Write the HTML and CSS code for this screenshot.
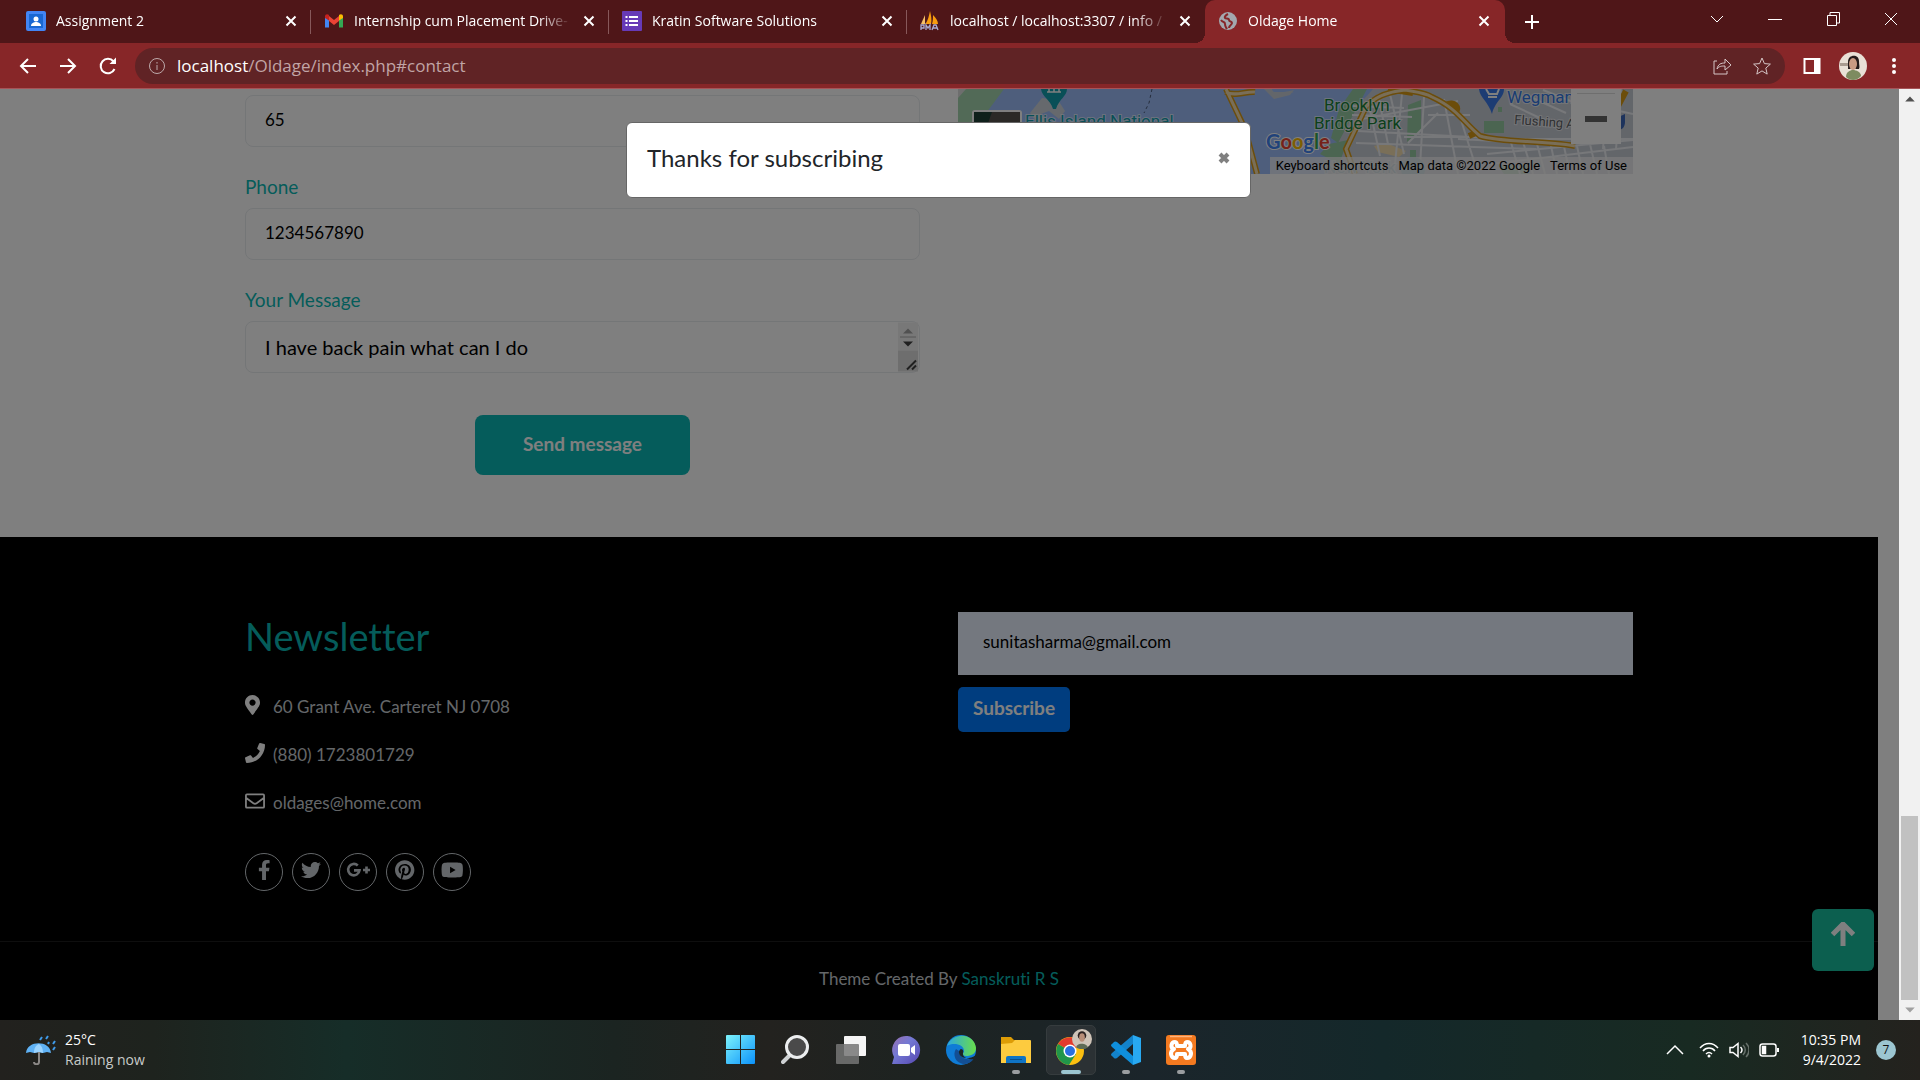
FILE: index.html
```html
<!DOCTYPE html>
<html lang="en">
<head>
<meta charset="utf-8">
<title>Oldage Home</title>
<link rel="stylesheet" href="styles.css">
</head>
<body class="desktop">

<header class="tabstrip">
  <nav class="tabs" aria-label="Tabs">
    <div class="tab">
      <svg class="favicon" viewBox="0 0 20 20"><rect width="20" height="20" rx="2" fill="#4285f4"/><rect x="3" y="3" width="14" height="14" fill="#1967d2"/><circle cx="10" cy="8" r="2.5" fill="#fff"/><path d="M5 15c0-3 3-4 5-4s5 1 5 4z" fill="#fff"/></svg>
      <a href="#" class="tab-title">Assignment 2</a>
      <button class="tab-close" aria-label="Close tab"><svg viewBox="0 0 12 12"><path d="M1.500 1.500l9 9m0-9l-9 9"/></svg></button>
    </div>
    <div class="tab">
      <svg class="favicon" viewBox="0 0 20 20"><path d="M1 5v11.500h4V9z" fill="#4285f4"/><path d="M19 5v11.500h-4V9z" fill="#34a853"/><path d="M5 5v5l5 4 5-4V5l-5 4z" fill="#ea4335"/><path d="M1 5.500C1 3 3.500 2.500 5 4v5.500L1 7z" fill="#c5221f"/><path d="M19 5.500C19 3 16.500 2.500 15 4v5.500L19 7z" fill="#fbbc04"/></svg>
      <a href="#" class="tab-title">Internship cum Placement Drive-</a>
      <button class="tab-close" aria-label="Close tab"><svg viewBox="0 0 12 12"><path d="M1.500 1.500l9 9m0-9l-9 9"/></svg></button>
    </div>
    <div class="tab">
      <svg class="favicon" viewBox="0 0 20 20"><rect width="20" height="20" rx="1" fill="#673ab7"/><path d="M7 6h9M7 10h9M7 14h9M3.500 6h2M3.500 10h2M3.500 14h2" stroke="#fff" stroke-width="2"/></svg>
      <a href="#" class="tab-title">Kratin Software Solutions</a>
      <button class="tab-close" aria-label="Close tab"><svg viewBox="0 0 12 12"><path d="M1.500 1.500l9 9m0-9l-9 9"/></svg></button>
    </div>
    <div class="tab">
      <svg class="favicon" viewBox="0 0 20 20"><path d="M1 13L5 4v9z" fill="#f6c067"/><path d="M5.500 13C8 9 9 5 10 0c1 4 2 9 1 13z" fill="#f89c0e"/><path d="M12 13c1-3 1-6 1-9 3 3 5 6 5 9z" fill="#f89c0e"/><path d="M1 19v-5h3v3H1m5 2v-5l2 3 2-3v5m2 0l2-5h2l2 5m-5-2h4" fill="none" stroke="#a9abd0" stroke-width="1.300"/></svg>
      <a href="#" class="tab-title">localhost / localhost:3307 / info /</a>
      <button class="tab-close" aria-label="Close tab"><svg viewBox="0 0 12 12"><path d="M1.500 1.500l9 9m0-9l-9 9"/></svg></button>
    </div>
    <div class="tab tab-active">
      <svg class="favicon" viewBox="0 0 20 20"><circle cx="10" cy="10" r="9" fill="#a3a8ae"/><path d="M10 3c-2 1-4 3-3 4s4 0 4 2 3 1 3 3-3 2-3 5M3 9c2 3 4 1 4 4s1 3 2 5" fill="none" stroke="#872628" stroke-width="2"/></svg>
      <a href="#" class="tab-title">Oldage Home</a>
      <button class="tab-close" aria-label="Close tab"><svg viewBox="0 0 12 12"><path d="M1.500 1.500l9 9m0-9l-9 9"/></svg></button>
    </div>
    <button class="new-tab" aria-label="New tab"><svg viewBox="0 0 16 16"><path d="M8 1v14M1 8h14"/></svg></button>
  </nav>
  <div class="window-controls">
    <button aria-label="Search tabs"><svg viewBox="0 0 14 14"><path d="M1 4l6 6 6-6"/></svg></button>
    <button aria-label="Minimize"><svg viewBox="0 0 14 14"><path d="M0 7.500h14"/></svg></button>
    <button aria-label="Restore"><svg viewBox="0 0 14 14"><path d="M1.500 3.500h9v10h-9zM4 3V.5h9.500V11H11"/></svg></button>
    <button aria-label="Close"><svg viewBox="0 0 14 14"><path d="M1 1l12 12M13 1L1 13"/></svg></button>
  </div>
</header>

<div class="toolbar">
  <div class="nav-buttons">
    <button aria-label="Back"><svg viewBox="0 0 20 20"><path d="M18 10H3m7-7l-7 7 7 7"/></svg></button>
    <button aria-label="Forward"><svg viewBox="0 0 20 20"><path d="M2 10h15m-7-7l7 7-7 7"/></svg></button>
    <button aria-label="Reload"><svg viewBox="0 0 20 20"><path d="M16.500 13A7.200 7.200 0 1 1 15.500 5.500"/><path d="M18 1.500V8h-6.500z" fill="#fff" stroke="none"/></svg></button>
  </div>
  <div class="omnibox">
    <svg class="info" viewBox="0 0 18 18"><circle cx="9" cy="9" r="7.500"/><path d="M9 8v5M9 5v1.600"/></svg>
    <p class="url"><b>localhost</b>/Oldage/index.php#contact</p>
    <button aria-label="Share"><svg viewBox="0 0 20 20"><path d="M5 5H2v13h13v-3M5 13c1-5 4-6 8-6V3l6 6-6 5v-4c-3 0-6 0-8 3z"/></svg></button>
    <button aria-label="Bookmark"><svg viewBox="0 0 20 20"><path d="M10 2l2.400 5.600 6 .5-4.600 4 1.400 6-5.200-3.200-5.200 3.200 1.400-6-4.600-4 6-.5z"/></svg></button>
  </div>
  <button class="tool" aria-label="Side panel"><svg viewBox="0 0 20 20"><path d="M2.500 3h15v14h-15z"/><path d="M12 3h6v14h-6z" fill="#fff" stroke="none"/></svg></button>
  <button class="tool" aria-label="Profile"><svg class="avatar" viewBox="0 0 28 28"><circle cx="14" cy="14" r="14" fill="#e9e0d6"/><path d="M1 14h8v-3H1z" fill="#a89b90"/><path d="M7 25c0-5 4-7 7-7s8 2 8 6c-4 5-11 5-15 1z" fill="#7d8b60"/><path d="M9 10c0-8 11-8 11-1 0 4 1 6 0 8H9z" fill="#241b1b"/><ellipse cx="14" cy="12" rx="4" ry="6" fill="#c99b83"/></svg></button>
  <button class="tool tool-menu" aria-label="Menu"><svg viewBox="0 0 20 20"><g fill="#fff" stroke="none"><circle cx="10" cy="4" r="2"/><circle cx="10" cy="10" r="2"/><circle cx="10" cy="16" r="2"/></g></svg></button>
</div>

<main class="viewport">
  <div class="page">
    <section class="contact">
      <form class="contact-form">
        <input class="field" type="text" value="65" aria-label="Age">
        <label class="label" for="phone">Phone</label>
        <input class="field" id="phone" type="text" value="1234567890">
        <label class="label" for="message">Your Message</label>
        <div class="message">
          <textarea class="field" id="message" rows="1">I have back pain what can I do</textarea>
          <svg class="message-scroll" viewBox="0 0 20 49"><path d="M0 0h20v28H0z" fill="#f1f1f1"/><path d="M0 28h20v21H0z" fill="#dcdcdc"/><path d="M5 11l5-5 5 5z" fill="#a3a3a3"/><path d="M2 14.500h16" stroke="#aaa"/><path d="M5 19l5 5 5-5z" fill="#404040"/><path d="M9 47l9-9M14 47l4-4" stroke="#404040" stroke-width="2"/></svg>
        </div>
        <button class="send" type="button">Send message</button>
      </form>
      <div class="map">
        <svg viewBox="0 0 675 85" preserveAspectRatio="xMinYMin slice" role="img" aria-label="Map">
          <rect width="675" height="85" fill="#c7ccd5"/>
          <path d="M0 0h415c-8 10-20 20-25 27-8 20-16 35-20 58H0z" fill="#9cbdf9"/>
          <path d="M0 0h46L0 62z" fill="#a4d5ae"/><path d="M0 0h8L0 9z" fill="#ddd"/>
          <path d="M306 0h8c0 5 10 4 22 1l-4 5-16 4zM316 3h20l-18 6z" fill="#c7ccd5"/>
          <path d="M395 0h14l-15 28-14 26-7-5 8-29zM362 65l9-10 19-4-9 24z" fill="#96cba3"/>
          <path d="M72 24L84 9l16 2 7 11-6 8-10-8-8 3 8 10-8 4z" fill="#ccd2da"/>
          <g fill="#96cba3"><path d="M450 16l13-5v30l-14 12zM526 32h20v12h-20zM540 18h4v5h-4zM452 61h6v24h-6zM540 76h30v9h-24zM634 38l5-6v8z"/></g>
          <g fill="#f4dfb0"><path d="M416 57l12-3 20 8-7 6-21-5z"/></g>
          <g stroke="#eef0f4" stroke-width="2" fill="none">
            <path d="M404 30l96-18M400 42l150 8M398 54l180 6M444 5l-8 80M466 8l-4 70M486 10l14 75M498 15l22 70M480 24l-30 30M394 17l52 2M394 26l60 2M420 5l10 50M410 12l12 55M432 5l14 60M470 26h42M446 48h90M552 50l10 35M565 53l10 32M578 51l9 34M592 52l7 33M605 53l7 32M619 57l6 28M632 55l7 30M646 57l5 28M529 65l146-14M533 75l142-17M500 50l100 5M552 15l30 14M568 6l40 18M585 1l30 12M630 15l45 10M649 0l-4 60M663 0l-5 60M548 50h127"/>
          </g>
          <g fill="none" stroke="#d99a15" stroke-width="6"><path d="M268 0l19 40 12 45M268 3c8 5 20-1 29 0M397 85l-9-25 20-42c8-10 20-15 39-17 10 2 18 2 27 7 26 12 30 24 48 39 24 7 60 4 95 10"/><path d="M430 0l25 4M488 16c8-5 15 3 9 8M520 43l-9 4M668 2l-8 15"/></g>
          <g fill="none" stroke="#f2ddb0" stroke-width="3"><path d="M268 0l19 40 12 45M268 3c8 5 20-1 29 0M397 85l-9-25 20-42c8-10 20-15 39-17 10 2 18 2 27 7 26 12 30 24 48 39 24 7 60 4 95 10"/></g>
          <path d="M194 0l-3 14-5 10" fill="none" stroke="#4b5a78" stroke-dasharray="3 3"/>
          <path d="M83 0h26c0 7-8 10-11 20h-3C92 10 84 8 83 0z" fill="#129eaf"/><path d="M89 3h14M91 0v3m5-3v3m5-3v3" stroke="#fff" stroke-width="1.500"/>
          <rect x="14" y="21" width="50" height="50" rx="3" fill="#fff"/><rect x="16" y="23" width="46" height="48" fill="#57534d"/><path d="M16 23h18l-5 14H16z" fill="#1f4037"/>
          <g class="map-label">
            <text x="67" y="38" font-size="17" fill="#129eaf">Ellis Island National</text>
            <text x="366" y="22" font-size="17" fill="#188038">Brooklyn</text>
            <text x="356" y="40" font-size="17" fill="#188038">Bridge Park</text>
            <text x="549" y="14" font-size="17" fill="#3478e5">Wegmans</text>
            <text x="556" y="35" font-size="13" fill="#5f6368" transform="rotate(4 556 35)">Flushing Ave</text>
            <text x="366" y="84" font-size="17" fill="#8fb9c8">New York</text>
          </g>
          <path d="M521 0h25c0 9-9 12-12 25-4-13-12-16-13-25z" fill="#3b78e7"/><path d="M528 0l3 5h8l2-5M530 8h9" fill="none" stroke="#fff" stroke-width="2"/>
          <circle cx="455" cy="80" r="12" fill="#8fc4cf"/>
          <path d="M656 30l11-5v8c0 5-3 8-7 8z" fill="#3b66b8"/>
          <text class="map-logo" x="308" y="60" font-size="20"><tspan fill="#4285f4">G</tspan><tspan fill="#ea4335">o</tspan><tspan fill="#fbbc04">o</tspan><tspan fill="#4285f4">g</tspan><tspan fill="#34a853">l</tspan><tspan fill="#ea4335">e</tspan></text>
          <path d="M613 0h50v55h-50z" fill="#fff"/><path d="M619 4.500h38" stroke="#ddd"/><path d="M627 27h22v6h-22z" fill="#666"/>
        </svg>
        <p class="map-legal"><a href="#">Keyboard shortcuts</a><span>Map data ©2022 Google</span><a href="#">Terms of Use</a></p>
      </div>
    </section>

    <footer class="footer">
      <div class="footer-grid">
        <div>
          <h2 class="footer-title">Newsletter</h2>
          <ul class="address">
            <li><svg viewBox="0 0 512 512"><path d="M172.268 501.670C26.970 291.031 0 269.413 0 192 0 85.961 85.961 0 192 0s192 85.961 192 192c0 77.413-26.970 99.031-172.268 309.670-9.535 13.774-29.930 13.773-39.464 0zM192 272c44.183 0 80-35.817 80-80s-35.817-80-80-80-80 35.817-80 80 35.817 80 80 80z"/></svg><span>60 Grant Ave. Carteret NJ 0708</span></li>
            <li><svg viewBox="0 0 512 512"><path d="M493.400 24.600l-104-24c-11.300-2.600-22.900 3.300-27.500 13.900l-48 112c-4.200 9.800-1.400 21.300 6.900 28l60.600 49.600c-36 76.700-98.900 140.500-177.200 177.200l-49.600-60.600c-6.800-8.300-18.200-11.100-28-6.900l-112 48C3.900 366.500-2 378.100.6 389.400l24 104C27.100 504.200 36.700 512 48 512c256.100 0 464-207.500 464-464 0-11.200-7.700-20.900-18.600-23.400z"/></svg><span>(880) 1723801729</span></li>
            <li><svg viewBox="0 0 512 512"><path d="M48 88h416q24 0 24 24v288q0 24-24 24H48q-24 0-24-24V112q0-24 24-24zM24 172l190 140q42 28 84 0l190-140" fill="none" stroke="#fff" stroke-width="46"/></svg><span>oldages@home.com</span></li>
          </ul>
          <div class="social">
            <a href="#" aria-label="Facebook"><svg viewBox="0 0 320 512"><path d="M279.140 288l14.220-92.660h-88.910v-60.130c0-25.350 12.420-50.060 52.240-50.060h40.420V6.260S260.430 0 225.360 0c-73.220 0-121.080 44.380-121.080 124.720v70.620H22.890V288h81.390v224h100.170V288z"/></svg></a>
            <a href="#" aria-label="Twitter"><svg viewBox="0 0 512 512"><path d="M459.370 151.716c.325 4.548.325 9.097.325 13.645 0 138.720-105.583 298.558-298.558 298.558-59.452 0-114.680-17.219-161.137-47.106 8.447.974 16.568 1.299 25.340 1.299 49.055 0 94.213-16.568 130.274-44.832-46.132-.975-84.792-31.188-98.112-72.772 6.498.974 12.995 1.624 19.818 1.624 9.421 0 18.843-1.300 27.614-3.573-48.081-9.747-84.143-51.980-84.143-102.985v-1.299c13.969 7.797 30.214 12.670 47.431 13.319-28.264-18.843-46.781-51.005-46.781-87.391 0-19.492 5.197-37.360 14.294-52.954 51.655 63.675 129.300 105.258 216.365 109.807-1.624-7.797-2.599-15.918-2.599-24.040 0-57.828 46.782-104.934 104.934-104.934 30.213 0 57.502 12.670 76.670 33.137 23.715-4.548 46.456-13.320 66.599-25.340-7.798 24.366-24.366 44.833-46.132 57.827 21.117-2.273 41.584-8.122 60.426-16.243-14.292 20.791-32.161 39.308-52.628 54.253z"/></svg></a>
            <a href="#" aria-label="Google Plus"><svg viewBox="0 0 24 20"><path d="M11.800 5.500A5.700 5.700 0 1 0 13.500 10.400H8M17 10h7m-3.500-3.500v7" fill="none" stroke="#c7cdd2" stroke-width="2.600"/></svg></a>
            <a href="#" aria-label="Pinterest"><svg viewBox="0 0 496 512"><path d="M496 256c0 137-111 248-248 248-25.600 0-50.200-3.900-73.400-11.100 10.100-16.500 25.200-43.500 30.800-65 3-11.600 15.400-59 15.400-59 8.100 15.400 31.700 28.500 56.800 28.500 74.800 0 128.700-68.800 128.700-154.300 0-81.900-66.900-143.200-152.900-143.200-107 0-163.900 71.800-163.900 150.100 0 36.400 19.400 81.700 50.300 96.100 4.700 2.200 7.200 1.200 8.300-3.300.8-3.400 5-20.300 6.900-28.100.6-2.500.3-4.700-1.700-7.100-10.100-12.500-18.300-35.300-18.300-56.600 0-54.700 41.400-107.600 112-107.600 60.900 0 103.600 41.500 103.600 100.900 0 67.100-33.900 113.600-78 113.600-24.300 0-42.600-20.100-36.700-44.800 7-29.500 20.500-61.300 20.500-82.600 0-19-10.200-34.900-31.400-34.900-24.900 0-44.900 25.700-44.900 60.200 0 22 7.400 36.800 7.400 36.800s-24.500 103.800-29 123.200c-5 21.400-3 51.600-.9 71.200C65.400 450.900 0 361.100 0 256 0 119 111 8 248 8s248 111 248 248z"/></svg></a>
            <a href="#" aria-label="YouTube"><svg viewBox="0 0 576 512"><path d="M549.655 124.083c-6.281-23.650-24.787-42.276-48.284-48.597C458.781 64 288 64 288 64S117.220 64 74.629 75.486c-23.497 6.322-42.003 24.947-48.284 48.597-11.412 42.867-11.412 132.305-11.412 132.305s0 89.438 11.412 132.305c6.281 23.650 24.787 41.500 48.284 47.821C117.220 448 288 448 288 448s170.780 0 213.371-11.486c23.497-6.321 42.003-24.171 48.284-47.821 11.412-42.867 11.412-132.305 11.412-132.305s0-89.438-11.412-132.305zm-317.510 213.508V175.185l142.739 81.205-142.739 81.201z"/></svg></a>
          </div>
        </div>
        <form class="subscribe-form">
          <input class="email" type="email" value="sunitasharma@gmail.com" aria-label="Email address">
          <button class="subscribe" type="button">Subscribe</button>
        </form>
      </div>
      <p class="copyright">Theme Created By <a href="#">Sanskruti R S</a></p>
    </footer>
  </div>
  <a class="to-top" href="#" aria-label="Back to top"><svg viewBox="0 0 24 24"><path d="M12 24V3M1.500 12.500L12 2l10.500 10.500"/></svg></a>
  <div class="backdrop"></div>
  <div class="modal" role="dialog" aria-labelledby="modal-title">
    <h4 id="modal-title" class="modal-title">Thanks for subscribing</h4>
    <button class="modal-close" aria-label="Close"><svg viewBox="0 0 12 12"><path d="M2 2l8 8m0-8l-8 8"/></svg></button>
  </div>
  <div class="scrollbar" aria-hidden="true">
    <svg viewBox="0 0 21 21"><path d="M6 13l5-5 5 5z" fill="#505050"/></svg>
    <div class="thumb"></div>
    <svg viewBox="0 0 21 21"><path d="M6 8l5 5 5-5z" fill="#a0a0a0"/></svg>
  </div>
</main>

<footer class="taskbar">
  <div class="weather">
    <svg viewBox="0 0 30 30"><path d="M0 18C1 5 24 5 25 18l-4-1-4 1-4-1-5 1-4-1z" fill="#5fb2f5"/><path d="M8 18c0-5 2-8 5-9 3 2 4 5 4 9l-4-1z" fill="#9bd4ff"/><path d="M13 17v10c0 3-5 3-5 0" fill="none" stroke="#8b8886" stroke-width="2"/><path d="M14 5l2-3M20 4l2-3M22 9l1-2M27 9l2-3M27 15l2-3" stroke="#3f9bea" stroke-width="2"/></svg>
    <p>25°C<br><span>Raining now</span></p>
  </div>
  <nav class="apps" aria-label="Applications">
    <button aria-label="Start"><svg viewBox="0 0 30 30"><defs><linearGradient id="win" x2="1" y2="1"><stop stop-color="#7df3fb"/><stop offset="1" stop-color="#0b92fb"/></linearGradient></defs><path d="M0 1q0-1 1-1h13v14H0zM15 0h13q1 0 1 1v13H15zM0 15h14v14H1q-1 0-1-1zM15 15h14v13q0 1-1 1H15z" fill="url(#win)"/></svg></button>
    <button aria-label="Search"><svg viewBox="0 0 30 30"><path d="M9 20l-7 7" stroke="#cfd2d4" stroke-width="4" stroke-linecap="round"/><circle cx="16" cy="12" r="10.500" fill="#4a4a4a" stroke="#eceeef" stroke-width="3"/></svg></button>
    <button aria-label="Task view"><svg viewBox="0 0 30 30"><rect x="8" y="1" width="22" height="20" rx="1" fill="#f5f5f5"/><rect y="9" width="23" height="20" rx="1" fill="#757575" opacity=".85"/></svg></button>
    <button aria-label="Chat"><svg viewBox="0 0 30 30"><defs><linearGradient id="chat" x2="1" y2="1"><stop stop-color="#9a6fae"/><stop offset=".4" stop-color="#7479d4"/><stop offset="1" stop-color="#5546b0"/></linearGradient></defs><path d="M1 29l2-7A14 14 0 1 1 15 29z" fill="url(#chat)"/><rect x="7" y="9" width="12" height="12" rx="2" fill="#fff"/><path d="M20 13l4-3v10l-4-3z" fill="#fff"/></svg></button>
    <button aria-label="Edge"><svg viewBox="0 0 30 30"><defs><linearGradient id="edge" x2="1"><stop stop-color="#2aa7e0"/><stop offset="1" stop-color="#6ade4a"/></linearGradient></defs><circle cx="15" cy="15" r="15" fill="#0f7cd6"/><path d="M1 11C6-3 28-3 30 13c0 6-5 8-10 8-3 0-4-2-2-4 1-8-11-10-17-6z" fill="url(#edge)"/><path d="M10 14c-4 6 0 14 7 15 5 0 9-2 11-6-7 3-15 0-15-7z" fill="#134f94"/><path d="M17 18c1-3-1-4-2-4-4 2-2 9 5 9 4 0 8-1 11-4v5c-5 1-15 0-14-6z" fill="#1d2524"/></svg></button>
    <button class="open" aria-label="File Explorer"><svg viewBox="0 0 30 30"><path d="M0 2h10l3 3h16v8H0z" fill="#dd9c06"/><path d="M0 9l11-1 3-3h15q1 0 1 1v22H0z" fill="#fdcb3f"/><path d="M5 28v-5q0-2 2-2h16q2 0 2 2v5z" fill="#0f74c5"/><path d="M9 24.500h12" stroke="#0a4f8c"/></svg></button>
    <button class="open current" aria-label="Chrome"><svg viewBox="0 0 30 30"><circle cx="14" cy="16" r="14" fill="#fbbf10"/><path d="M14 16L2 9a14 14 0 0 1 24 0z" fill="#e33b2e"/><path d="M2 9a14 14 0 0 0 11 21l7-11-6-3z" fill="#21964a"/><circle cx="14" cy="16" r="6.500" fill="#fff"/><circle cx="14" cy="16" r="5" fill="#2a6fe0"/></svg><svg class="app-badge" viewBox="0 0 28 28"><circle cx="14" cy="14" r="14" fill="#cfc4b8"/><path d="M6 26c0-7 15-7 16 0-5 3-11 3-16 0z" fill="#5e6b55"/><circle cx="14" cy="9" r="6" fill="#2c2221"/><ellipse cx="14" cy="12" rx="4" ry="6" fill="#b88e78"/></svg></button>
    <button class="open" aria-label="Visual Studio Code"><svg viewBox="0 0 30 30"><path d="M22 0l8 3v24l-8 3z" fill="#28a9f2"/><path d="M22 0L1 18q-2 2 0 3l2 2q1 1 3 0L22 9z" fill="#1383cb"/><path d="M22 30L1 12q-2-2 0-3l2-2q1-1 3 0l16 14z" fill="#0f8fdc"/></svg></button>
    <button class="open" aria-label="XAMPP"><svg viewBox="0 0 30 30"><rect width="30" height="30" rx="3" fill="#f47a20"/><path d="M9 7c-4 0-5 6-1 7-5 3-3 9 1 9 2 0 2-3 2-4h8c0 1 0 4 2 4 4 0 6-6 1-9 4-1 3-7-1-7-2 0-2 3-2 4h-8c0-1 0-4-2-4z" fill="none" stroke="#fff" stroke-width="4" stroke-linejoin="round"/><path d="M4 1.500h22" stroke="#ffb37a" stroke-width="1.500"/></svg></button>
  </nav>
  <div class="tray">
    <svg viewBox="0 0 20 20"><path d="M2 14l8-8 8 8"/></svg>
    <svg viewBox="0 0 20 20"><path d="M1 8c5-6 13-6 18 0M4 11c3-4 9-4 12 0M7 14c2-2 4-2 6 0"/><circle cx="10" cy="16" r="1.500" fill="#fff" stroke="none"/></svg>
    <svg viewBox="0 0 20 20"><path d="M1 7.500h3l5-4v13l-5-4H1z"/><path d="M11.500 7c2 2 2 4 0 6"/><path d="M14 5c3 3 3 7 0 10M17 3c4 4 4 10 0 14" stroke="#66706a"/></svg>
    <svg viewBox="0 0 20 20"><rect x="1" y="4" width="16" height="12" rx="2.500"/><path d="M3.500 6.500h3v7h-3z" fill="#fff"/><path d="M19 8v4" stroke-width="2"/></svg>
    <p class="clock">10:35 PM<br>9/4/2022</p>
    <span class="count">7</span>
  </div>
</footer>
</body>
</html>
```
FILE: styles.css
```css
* { box-sizing: border-box; }

.desktop {
  margin: 0;
  height: 100vh;
  overflow: hidden;
  display: grid;
  grid-template-rows: 43px 46px minmax(0, 1fr) 60px;
  font-family: "Open Sans", "Noto Sans", sans-serif;
  color: #fff;
}

button, input, textarea { font: inherit; color: inherit; margin: 0; }
button { border: 0; padding: 0; background: none; display: inline-flex; align-items: center; justify-content: center; }
a { color: inherit; text-decoration: none; }
p, h2, h4, ul { margin: 0; padding: 0; font-weight: 400; }

/* Browser tabs */
.tabstrip { display: flex; justify-content: space-between; background: #4f1618; }
.tabs { display: flex; flex: 0 1 1560px; min-width: 0; padding-left: 13px; }
.tab {
  position: relative;
  display: flex;
  align-items: center;
  gap: 10px;
  flex: 0 1 298px;
  min-width: 0;
  padding: 0 12px 2px 13px;
  font-size: 14px;
}
.tab:not(.tab-active)::after { content: ""; position: absolute; right: 0; top: 10px; width: 1px; height: 24px; background: #87585a; }
.tab:has(+ .tab-active)::after { display: none; }
.favicon { width: 20px; height: 20px; flex: none; }
.tab-title {
  flex: 1;
  overflow: hidden;
  white-space: nowrap;
  mask-image: linear-gradient(to right, #000 calc(100% - 32px), transparent);
}
.tab-close svg { width: 12px; height: 12px; }
.tab-close { width: 16px; height: 16px; }
.tab-close path, .new-tab path { fill: none; stroke: #fff; stroke-width: 2; }
.tab-active { background: #872628; border-radius: 10px 10px 0 0; flex-basis: 300px; padding-right: 13px; }
.tab-active::before, .tab-active::after { content: ""; position: absolute; bottom: 0; width: 10px; height: 10px; }
.tab-active::before { right: 100%; background: radial-gradient(circle at 0 0, transparent 10px, #872628 10px); }
.tab-active::after { left: 100%; background: radial-gradient(circle at 100% 0, transparent 10px, #872628 10px); }
.new-tab { width: 54px; flex: none; }
.new-tab svg { width: 16px; height: 16px; }
.window-controls { display: flex; }
.window-controls button { width: 58px; height: 38px; }
.window-controls svg { width: 14px; height: 14px; }
.window-controls path { fill: none; stroke: #fff; }

/* Address bar */
.toolbar { display: flex; align-items: center; background: #872628; border-bottom: 1px solid #a65458; padding: 0 6px 0 8px; }
.toolbar svg { width: 20px; height: 20px; fill: none; stroke: #fff; stroke-width: 2; }
.nav-buttons { display: flex; width: 127px; }
.nav-buttons button { width: 40px; height: 36px; }
.omnibox {
  display: flex;
  align-items: center;
  flex: 1;
  height: 36px;
  border-radius: 18px;
  background: #602325;
  padding: 0 3px 0 13px;
}
.omnibox button { width: 40px; height: 36px; }
.omnibox button svg { stroke: #d5c5c6; stroke-width: 1; }
.omnibox .info { width: 18px; height: 18px; stroke: #bda9aa; stroke-width: 1; }
.url { flex: 1; padding-left: 11px; font-size: 17px; color: #c1a5a6; }
.url b { font-weight: 400; color: #fff; }
.tool { width: 41px; height: 36px; margin-left: 6px; }
.tool + .tool { margin-left: 0; }
.tool .avatar { width: 28px; height: 28px; stroke: none; }

/* Web page */
.viewport {
  position: relative;
  overflow: hidden;
  display: grid;
  grid-template-columns: minmax(0, 1fr) 21px;
  background: #fff;
  font-family: Lato, "Open Sans", sans-serif;
  font-variant-ligatures: none;
}
.page { padding-right: 21px; color: #000; }
.contact, .footer-grid { display: grid; grid-template-columns: 1fr 1fr; gap: 38px; max-width: 1388px; margin: 0 auto; }
.contact { padding-bottom: 62px; align-items: start; }
.contact-form { display: flex; flex-direction: column; padding-top: 6px; }
.field {
  display: block;
  width: 100%;
  height: 52px;
  padding: 0 19px 4px;
  border: 1px solid #e9ecef;
  border-radius: 8px;
  background: #fff;
  font-size: 17px;
}
.label { margin: 28px 0 9px; font-size: 19px; line-height: 24px; color: #0ab9b5; }
.message { position: relative; }
.message .field { resize: none; overflow: hidden; font-size: 20px; line-height: 24px; padding-top: 13px; }
.message-scroll { position: absolute; right: 2px; top: 1px; width: 20px; height: 50px; }
.send {
  align-self: center;
  width: 215px;
  height: 60px;
  margin-top: 42px;
  padding-bottom: 4px;
  border-radius: 8px;
  background: #0ab8b6;
  color: #fff;
  font-size: 19px;
  font-weight: 700;
}
.map { position: relative; height: 85px; overflow: hidden; font-family: Roboto, sans-serif; }
.map svg { display: block; width: 100%; height: 85px; }
.map-label text { paint-order: stroke; stroke: #fff; stroke-opacity: .6; stroke-width: 2px; }
.map-logo { font-family: Lato, sans-serif; paint-order: stroke; stroke: #fff; stroke-width: 2px; font-weight: 700; }
.map-legal {
  position: absolute;
  right: 0;
  bottom: 0;
  display: flex;
  gap: 10px;
  padding: 0 6px;
  background: rgba(245, 245, 245, .75);
  font-size: 13px;
  line-height: 17px;
}

/* Footer */
.footer { background: #000; color: #c9ced3; }
.footer-grid { padding: 75px 0 50px; }
.footer-title { color: #0ab9b5; font-size: 38px; line-height: 48px; margin-bottom: 35px; }
.address { list-style: none; display: grid; gap: 24px; font-size: 17px; line-height: 24px; }
.address li { display: flex; align-items: flex-start; gap: 8px; }
.address svg { width: 20px; height: 20px; fill: #fff; }
.social { display: flex; gap: 9px; margin-top: 38px; }
.social a {
  display: flex;
  align-items: center;
  justify-content: center;
  width: 38px;
  height: 38px;
  padding-bottom: 4px;
  border: 1px solid #c7cdd2;
  border-radius: 50%;
}
.social svg { height: 20px; fill: #c7cdd2; }
.subscribe-form { display: flex; flex-direction: column; align-items: flex-start; gap: 12px; }
.email { width: 100%; height: 63px; border: 0; border-radius: 0; padding: 0 25px 5px; background: #e8f0fe; color: #000; font-size: 17px; }
.subscribe { width: 112px; height: 45px; border-radius: 5px; padding-bottom: 4px; background: #007bff; color: #fff; font-size: 19px; font-weight: 700; }
.copyright { border-top: 1px solid #1c1c1c; padding: 24px 0 28px; text-align: center; font-size: 17px; line-height: 26px; }
.copyright a { color: #0ab9b5; }
.to-top {
  position: absolute;
  right: 46px;
  bottom: 49px;
  width: 62px;
  height: 62px;
  padding-top: 13px;
  border-radius: 6px;
  background: #18be9e;
  text-align: center;
}
.to-top svg { width: 24px; height: 24px; fill: none; stroke: #fff; stroke-width: 5; }
.backdrop { position: absolute; inset: 0 21px 0 0; background: rgba(0, 0, 0, .5); }
.modal {
  position: absolute;
  top: 33px;
  left: calc(50% - 334px);
  width: 625px;
  height: 76px;
  display: flex;
  align-items: center;
  justify-content: space-between;
  padding: 0 20px 4px;
  border: 1px solid #666;
  border-radius: 6px;
  background: #fff;
  color: #212529;
}
.modal-title { font-size: 24px; line-height: 30px; }
.modal-close svg { width: 12px; height: 12px; fill: none; stroke: #808080; stroke-width: 4; }
.scrollbar { grid-column: 2; display: flex; flex-direction: column; background: #f1f1f1; }
.scrollbar svg { width: 21px; height: 20px; flex: none; }
.thumb { width: 17px; height: 184px; margin: auto auto 0; background: #c1c1c1; }

/* Taskbar */
.taskbar {
  display: grid;
  grid-template-columns: 1fr auto 1fr;
  align-items: center;
  background: linear-gradient(to right, #22211e, #1e231e 8%, #162d28 18%, #1b2421 32%, #23221f 40%, #1d2321 48%, #1b252b 60%, #14282a 72%, #182a22 88%, #24221e);
}
.weather { display: flex; align-items: center; gap: 9px; padding-left: 26px; font-size: 14px; line-height: 20px; }
.weather svg { width: 30px; height: 30px; }
.weather span { color: #c8cbc9; }
.apps { display: flex; gap: 5px; padding-left: 2px; }
.apps button { position: relative; width: 50px; height: 50px; border-radius: 5px; }
.apps svg { width: 30px; height: 30px; }
.apps .open::after { content: ""; position: absolute; bottom: 1px; left: 21px; width: 8px; height: 4px; border-radius: 2px; background: #9a9da0; }
.apps .current { background: #2b3134; border: 1px solid #363c3e; }
.apps .current::after { left: 14px; width: 20px; background: #9cc6d1; bottom: 0; }
.apps .app-badge { position: absolute; right: 3px; top: 3px; width: 20px; height: 20px; }
.tray { display: flex; align-items: center; justify-content: flex-end; gap: 10px; padding-right: 24px; }
.tray svg { width: 20px; height: 20px; fill: none; stroke: #fff; stroke-width: 1.500; }
.tray svg:first-child { margin-right: 4px; }
.clock { margin-left: 12px; text-align: right; font-size: 14px; line-height: 20px; }
.count { width: 20px; height: 20px; margin-left: 5px; border-radius: 50%; background: #9cc6d1; color: #111; text-align: center; font-size: 12px; line-height: 20px; }
```
